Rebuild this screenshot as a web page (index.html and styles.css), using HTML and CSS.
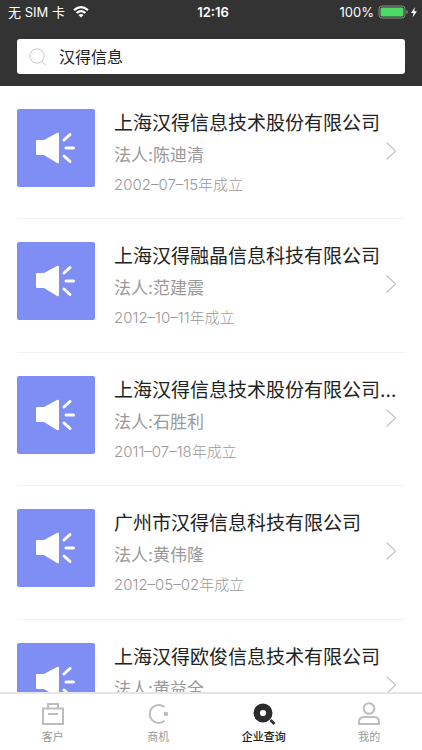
FILE: index.html
```html
<!DOCTYPE html>
<html lang="zh-CN">
<head>
<meta charset="utf-8">
<meta name="viewport" content="width=device-width, initial-scale=1">
<title>企业查询</title>
<link rel="stylesheet" href="styles.css">
</head>
<body>
<svg class="sprite" aria-hidden="true">
  <symbol id="horn" viewBox="0 0 78 78">
    <path fill="#fff" d="M20 31H27L40 24Q42 23 42 25V53Q42 55 40 54L27 46H20Q19 46 19 45V32Q19 31 20 31Z"/>
    <path stroke="#fff" stroke-width="3" stroke-linecap="round" d="M47 31L53 25.500M49 39H56.500M47 47L53 52.500"/>
  </symbol>
  <symbol id="chevron" viewBox="0 0 12 20">
    <path fill="none" stroke="#c3c3c3" stroke-width="1.200" d="M1.500 1.500L10.500 10L1.500 18.500"/>
  </symbol>
</svg>
<div class="app">
  <header class="top">
    <div class="status">
      <div class="carrier">
        <span>无 SIM 卡</span>
        <svg width="16" height="12" viewBox="0 0 16 12" fill="none" stroke="#fff" stroke-width="2.200"><path d="M1 4.200Q8-1.800 15 4.200M3.600 7Q8 3.200 12.400 7"/><path fill="#fff" stroke="none" d="M8 11.500L5.500 9Q8 7 10.500 9Z"/></svg>
      </div>
      <time class="clock">12:16</time>
      <div class="power">
        <span>100%</span>
        <svg width="40" height="14" viewBox="0 0 40 14"><rect x="1" y="1" width="26" height="12" rx="3" fill="none" stroke="#8b8b8b"/><rect x="2.500" y="2.500" width="23" height="9" rx="1.500" fill="#4cd964"/><path fill="#8b8b8b" d="M28.500 5Q30 5.500 30 7T28.500 9Z"/><path fill="#fff" d="M37 2L33 8H35.600L34.500 12.500L39 6.200H36.300Z"/></svg>
      </div>
    </div>
    <label class="search">
      <svg width="18" height="18" viewBox="0 0 18 18" fill="none" stroke="#c6c6c6"><circle cx="8" cy="8" r="7.200"/><path d="M13 13L16.500 17"/></svg>
      <input type="text" value="汉得信息" aria-label="搜索企业">
    </label>
  </header>
  <main class="results">
    <a class="company" href="#"><svg class="logo"><use href="#horn"/></svg><div class="info"><h2>上海汉得信息技术股份有限公司</h2><p class="person">法人:陈迪清</p><p class="date">2002–07–15年成立</p></div><svg class="arrow"><use href="#chevron"/></svg></a>
    <a class="company" href="#"><svg class="logo"><use href="#horn"/></svg><div class="info"><h2>上海汉得融晶信息科技有限公司</h2><p class="person">法人:范建震</p><p class="date">2012–10–11年成立</p></div><svg class="arrow"><use href="#chevron"/></svg></a>
    <a class="company" href="#"><svg class="logo"><use href="#horn"/></svg><div class="info"><h2>上海汉得信息技术股份有限公司…</h2><p class="person">法人:石胜利</p><p class="date">2011–07–18年成立</p></div><svg class="arrow"><use href="#chevron"/></svg></a>
    <a class="company" href="#"><svg class="logo"><use href="#horn"/></svg><div class="info"><h2>广州市汉得信息科技有限公司</h2><p class="person">法人:黄伟隆</p><p class="date">2012–05–02年成立</p></div><svg class="arrow"><use href="#chevron"/></svg></a>
    <a class="company" href="#"><svg class="logo"><use href="#horn"/></svg><div class="info"><h2>上海汉得欧俊信息技术有限公司</h2><p class="person">法人:黄益全</p></div><svg class="arrow"><use href="#chevron"/></svg></a>
  </main>
  <nav class="tabs">
    <a href="#"><svg width="24" height="24" viewBox="0 0 24 24" fill="none" stroke="#bdbdbd" stroke-width="2"><path d="M2 6.500H22V22H2ZM7 6.500V2H17V6.500M7 12H17"/></svg><span>客户</span></a>
    <a href="#"><svg width="24" height="24" viewBox="0 0 24 24" fill="none" stroke="#bdbdbd" stroke-width="2"><path d="M18.500 5A9 9 0 1 0 18.500 18.800"/><circle cx="20" cy="12" r="2.300" fill="#bdbdbd" stroke="none"/></svg><span>商机</span></a>
    <a class="active" href="#"><svg width="24" height="24" viewBox="0 0 24 24" fill="none" stroke="#2b2b2b"><circle cx="11" cy="11" r="6.300" stroke-width="6.400"/><path stroke-width="2.600" d="M18.500 18L22.500 22"/></svg><span>企业查询</span></a>
    <a href="#"><svg width="24" height="24" viewBox="0 0 24 24" fill="none" stroke="#bdbdbd" stroke-width="2"><circle cx="12" cy="6.500" r="5.300"/><path d="M2 22V20Q2 15 7 15H17Q22 15 22 20V22Z"/></svg><span>我的</span></a>
  </nav>
</div>
</body>
</html>
```
FILE: styles.css
```css
* {
  box-sizing: border-box;
}

body {
  margin: 0;
  background: #fff;
  color: #222;
  font-family: Inter, "Noto Sans CJK SC", sans-serif;
}

a {
  color: inherit;
  text-decoration: none;
}

h2,
p {
  margin: 0;
  font-weight: 400;
}

svg {
  display: block;
  flex: none;
}

.sprite {
  position: absolute;
  width: 0;
  height: 0;
}

.app {
  display: flex;
  flex-direction: column;
  height: 100vh;
}

.top {
  flex: none;
  padding-bottom: 12px;
  background: #333;
}

.status {
  display: grid;
  grid-template-columns: 1fr auto 1fr;
  align-items: center;
  height: 24px;
  padding: 0 4px 0 8px;
  color: #fff;
  font-size: 13px;
  line-height: 24px;
}

.carrier,
.power {
  display: flex;
  align-items: center;
  gap: 8px;
}

.power {
  justify-content: flex-end;
  gap: 4px;
}

.clock {
  font-weight: 600;
}

.search {
  display: flex;
  align-items: center;
  gap: 12px;
  height: 35px;
  margin: 15px 17px 0;
  padding: 0 12px;
  border-radius: 3px;
  background: #fff;
}

.search input {
  flex: 1;
  min-width: 0;
  padding: 0;
  border: 0;
  outline: 0;
  background: none;
  color: #222;
  font: inherit;
  font-size: 16px;
  line-height: 24px;
}

.results {
  flex: 1;
  min-height: 0;
  overflow: hidden;
}

.company {
  display: flex;
  align-items: flex-start;
  height: 133px;
  margin: 0 17px;
  padding-top: 23px;
  border-bottom: 1px solid #f2f2f2;
}

.company:nth-child(even) {
  height: 134px;
}

.logo {
  width: 78px;
  height: 78px;
  border-radius: 2px;
  background: #7f8ef5;
}

.info {
  flex: 1;
  min-width: 0;
  margin-left: 19px;
}

.info h2 {
  overflow: hidden;
  font-size: 19px;
  line-height: 30px;
  text-overflow: ellipsis;
  white-space: nowrap;
}

.person {
  margin-top: 2px;
  color: #999;
  font-size: 17px;
  line-height: 28px;
}

.date {
  margin-top: 4px;
  color: #999;
  font-size: 15px;
  font-weight: 300;
  line-height: 24px;
}

.arrow {
  width: 12px;
  height: 20px;
  margin: 32px 8px 0 -20px;
}

.tabs {
  display: grid;
  flex: none;
  grid-template-columns: repeat(4, 1fr);
  height: 58px;
  border-top: 2px solid #e6e6e6;
  background: #fff;
}

.tabs a {
  display: flex;
  flex-direction: column;
  align-items: center;
  gap: 3px;
  padding-top: 8px;
  color: #999;
  font-size: 11px;
  line-height: 16px;
}

.tabs .active {
  color: #222;
  font-weight: 500;
}
```
